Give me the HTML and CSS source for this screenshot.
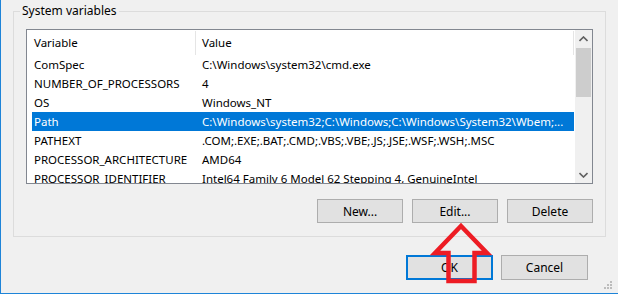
FILE: index.html
```html
<!DOCTYPE html>
<html>
<head>
<meta charset="utf-8">
<link rel="stylesheet" href="styles.css">
</head>
<body>
<div class="window">
  <section class="group">
    <div class="group-title">System variables</div>
    <div class="list">
      <div class="list-main">
        <div class="header">
          <div class="hcell hvar">Variable</div>
          <div class="hcell hval">Value</div>
        </div>
        <div class="rows">
          <div class="row"><span class="cell">ComSpec</span><span class="cell">C:\Windows\system32\cmd.exe</span></div>
          <div class="row"><span class="cell">NUMBER_OF_PROCESSORS</span><span class="cell">4</span></div>
          <div class="row"><span class="cell">OS</span><span class="cell">Windows_NT</span></div>
          <div class="row selected"><span class="cell">Path</span><span class="cell">C:\Windows\system32;C:\Windows;C:\Windows\System32\Wbem;...</span></div>
          <div class="row"><span class="cell">PATHEXT</span><span class="cell">.COM;.EXE;.BAT;.CMD;.VBS;.VBE;.JS;.JSE;.WSF;.WSH;.MSC</span></div>
          <div class="row"><span class="cell">PROCESSOR_ARCHITECTURE</span><span class="cell">AMD64</span></div>
          <div class="row"><span class="cell">PROCESSOR_IDENTIFIER</span><span class="cell">Intel64 Family 6 Model 62 Stepping 4, GenuineIntel</span></div>
        </div>
      </div>
      <div class="scrollbar">
        <div class="sb-btn">
          <svg width="9" height="6" viewBox="0 0 9 6"><path d="M0.5 5 L4.5 1 L8.5 5" fill="none" stroke="#606060" stroke-width="1.6"/></svg>
        </div>
        <div class="track"><div class="thumb"></div></div>
        <div class="sb-btn">
          <svg width="9" height="6" viewBox="0 0 9 6"><path d="M0.5 1 L4.5 5 L8.5 1" fill="none" stroke="#606060" stroke-width="1.6"/></svg>
        </div>
      </div>
    </div>
    <div class="actions">
      <button class="btn">New...</button>
      <button class="btn">Edit...</button>
      <button class="btn">Delete</button>
    </div>
  </section>
  <div class="footer">
    <button class="btn btn-foot btn-default">OK</button>
    <button class="btn btn-foot">Cancel</button>
  </div>
  <svg class="grip" width="12" height="12" viewBox="0 0 12 12">
    <rect x="7" y="1" width="2" height="2" fill="#bcbcbc"/>
    <rect x="4" y="4" width="2" height="2" fill="#bcbcbc"/>
    <rect x="7" y="4" width="2" height="2" fill="#bcbcbc"/>
    <rect x="1" y="7" width="2" height="2" fill="#bcbcbc"/>
    <rect x="4" y="7" width="2" height="2" fill="#bcbcbc"/>
    <rect x="7" y="7" width="2" height="2" fill="#bcbcbc"/>
  </svg>
  <svg class="arrow" width="70" height="70" viewBox="0 0 70 70">
    <path d="M31 4 L57 31 L44.5 31 L44.5 59 L18.5 59 L18.5 31 L5 31 Z" fill="none" stroke="#ed1c24" stroke-width="4.5" stroke-linejoin="miter"/>
  </svg>
</div>
</body>
</html>
```
FILE: styles.css
```css
* { box-sizing: border-box; }
html, body { margin: 0; padding: 0; }
body {
  background: #f0f0f0;
  font-family: "Noto Sans", "Open Sans", sans-serif;
  font-size: 11.5px;
  color: #000;
}
.window {
  position: relative;
  width: 618px;
  height: 294px;
  border-left: 1px solid #1e84d8;
  border-bottom: 1px solid #1e84d8;
  padding-top: 11px;
  overflow: hidden;
}
.group {
  margin: 0 0 0 12px;
  width: 593px;
  border: 1px solid #dcdcdc;
  padding: 0 12px 13px 6px;
}
.group-title {
  width: fit-content;
  margin-top: -9px;
  padding: 0 2px;
  line-height: 16px;
  font-size: 12px;
  background: #f0f0f0;
  white-space: nowrap;
}
.list {
  margin: 10px 0 0 6px;
  height: 155px;
  border: 1px solid #828790;
  background: #fff;
  display: flex;
}
.list-main {
  width: 548px;
  display: flex;
  flex-direction: column;
}
.header {
  height: 25px;
  display: flex;
}
.hcell {
  margin-top: 1px;
  height: 24px;
  line-height: 24px;
  border-right: 1px solid #e5e5e5;
  white-space: nowrap;
}
.hvar { width: 169px; padding-left: 7px; }
.hval { width: 378px; padding-left: 6px; }
.rows {
  height: 128px;
  overflow: hidden;
  padding-left: 5px;
  padding-right: 1px;
}
.row {
  height: 19px;
  line-height: 19px;
  display: grid;
  grid-template-columns: 168px 1fr;
}
.row.selected {
  background: #0078d7;
  color: #fff;
}
.cell {
  padding-left: 2px;
  white-space: nowrap;
  overflow: hidden;
}
.scrollbar {
  width: 17px;
  background: #f0f0f0;
  display: flex;
  flex-direction: column;
}
.sb-btn {
  height: 17px;
  display: flex;
  align-items: center;
  justify-content: center;
}
.sb-btn svg { display: block; }
.track {
  flex: 1;
  padding: 1px 1px 0 1px;
}
.thumb {
  height: 49px;
  background: #cdcdcd;
}
.actions {
  margin-top: 15px;
  display: flex;
  justify-content: flex-end;
  gap: 9px;
}
.btn {
  font-family: inherit;
  font-size: 12px;
  color: #000;
  width: 86px;
  height: 24px;
  background: #e1e1e1;
  border: 1px solid #adadad;
  padding: 0;
  margin: 0;
}
.footer {
  margin-top: 18px;
  display: flex;
  justify-content: flex-end;
  gap: 8px;
  padding-right: 30px;
}
.btn-foot {
  width: 87px;
  height: 25px;
}
.btn-default {
  border: 2px solid #0078d7;
}
.grip {
  position: absolute;
  right: 3px;
  bottom: 1px;
}
.arrow {
  position: absolute;
  left: 429px;
  top: 222px;
}
```
